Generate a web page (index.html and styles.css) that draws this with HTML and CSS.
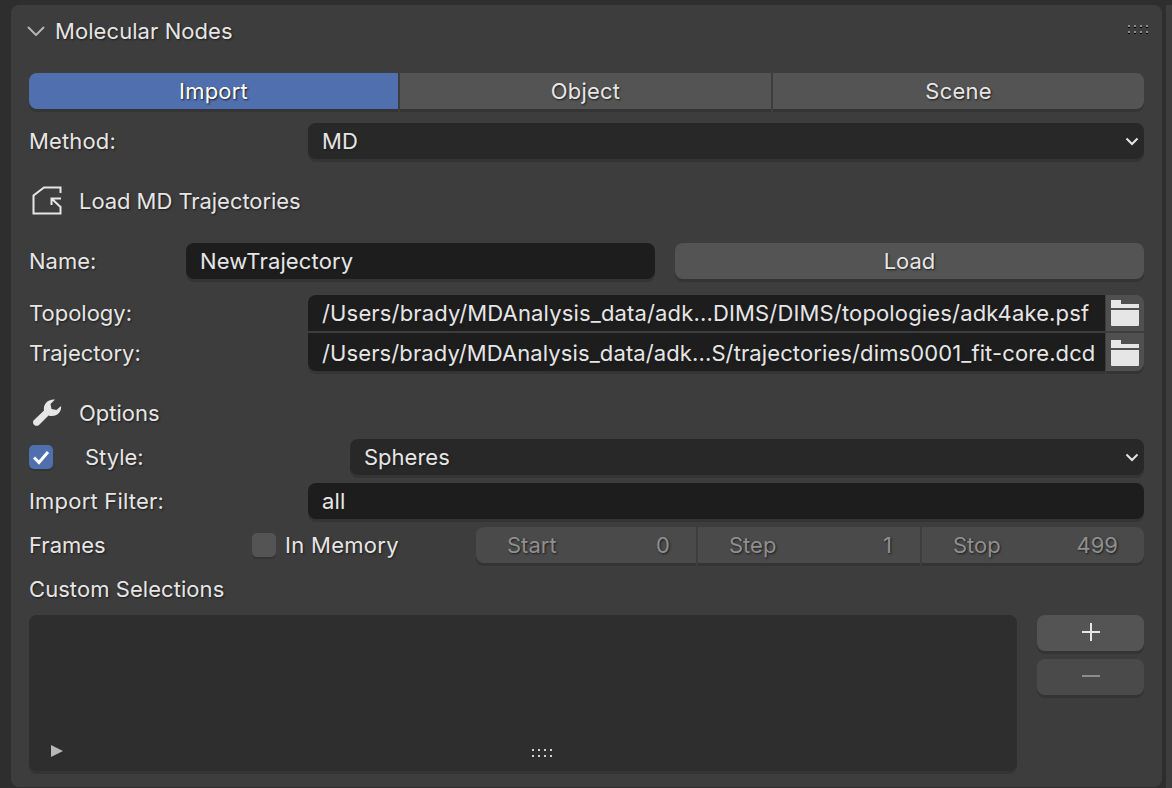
FILE: index.html
```html
<!DOCTYPE html>
<html lang="en">
<head>
    <meta charset="UTF-8">
    <meta name="viewport" content="width=device-width, initial-scale=1.0">
    <title>Molecular Nodes</title>
    <link rel="stylesheet" href="styles.css">
</head>
<body>

    <div class="Panel">

        <div class="Header">
            <svg class="Chevron" width="18" height="10" viewBox="0 0 18 10"><path d="M1 1l8 8 8-8" fill="none" stroke="#b4b4b4" stroke-width="2"/></svg>
            <span class="Title">Molecular Nodes</span>
            <svg class="Grip" width="21" height="11" viewBox="0 0 21 11">
                <path d="M0 3h2v1H0zM6 3h2v1H6zM12 3h2v1h-2zM18 3h2v1h-2zM0 9h2v1H0zM6 9h2v1H6zM12 9h2v1h-2zM18 9h2v1h-2z" fill="#000"/>
                <path d="M0 1h2v2H0zM6 1h2v2H6zM12 1h2v2h-2zM18 1h2v2h-2zM0 7h2v2H0zM6 7h2v2H6zM12 7h2v2h-2zM18 7h2v2h-2z" fill="#8c8c8c"/>
            </svg>
        </div>

        <div class="Tabs">
            <div class="Tab Active">Import</div>
            <div class="Tab">Object</div>
            <div class="Tab">Scene</div>
        </div>

        <div class="Row Method">
            <label class="Label Wide">Method:</label>
            <div class="Field Dropdown">MD
                <svg class="Arrow" width="14" height="9" viewBox="0 0 14 9"><path d="M1.500 1.500L7 7l5.500-5.500" fill="none" stroke="#e6e6e6" stroke-width="2"/></svg>
            </div>
        </div>

        <div class="Heading Load">
            <svg width="32" height="30" viewBox="0 0 32 30"><path d="M29.500 7V1.500H13L2.500 9.500V27.500H29.500V20M20.500 19V12.500H30M20.500 12.500L29.500 21" fill="none" stroke="#e6e6e6" stroke-width="2"/></svg>
            <span>Load MD Trajectories</span>
        </div>

        <div class="Row Name">
            <label class="Label Short">Name:</label>
            <div class="Field Input NameInput">NewTrajectory</div>
            <div class="Button LoadBtn">Load</div>
        </div>

        <div class="Row PathTop">
            <label class="Label Wide">Topology:</label>
            <div class="Field Input Path">/Users/brady/MDAnalysis_data/adk...DIMS/DIMS/topologies/adk4ake.psf</div>
            <div class="Browse">
                <svg width="28" height="26" viewBox="0 0 28 26"><path d="M0 0h10v4h18v4H0zM0 10h28v15a1 1 0 0 1-1 1H1a1 1 0 0 1-1-1z" fill="#e6e6e6"/></svg>
            </div>
        </div>

        <div class="Row PathBottom">
            <label class="Label Wide">Trajectory:</label>
            <div class="Field Input Path">/Users/brady/MDAnalysis_data/adk...S/trajectories/dims0001_fit-core.dcd</div>
            <div class="Browse">
                <svg width="28" height="26" viewBox="0 0 28 26"><path d="M0 0h10v4h18v4H0zM0 10h28v15a1 1 0 0 1-1 1H1a1 1 0 0 1-1-1z" fill="#e6e6e6"/></svg>
            </div>
        </div>

        <div class="Heading Options">
            <svg width="32" height="30" viewBox="0 0 32 30"><path d="M2.500 22.500L13 12.500C12 7 16 1 24 1.500L19.500 6 20.500 11 25.500 12 30 8C31 14 25 20 17.500 17.500L8 27C5 29.500 .5 26 2.500 22.500z" fill="#e6e6e6"/></svg>
            <span>Options</span>
        </div>

        <div class="Row Style">
            <div class="Check Checked">
                <svg width="18" height="16" viewBox="0 0 18 16"><path d="M2 8.500L7 13.500 16 3" fill="none" stroke="#fff" stroke-width="3"/></svg>
            </div>
            <label class="Label StyleLabel">Style:</label>
            <div class="Field Dropdown">Spheres
                <svg class="Arrow" width="14" height="9" viewBox="0 0 14 9"><path d="M1.500 1.500L7 7l5.500-5.500" fill="none" stroke="#e6e6e6" stroke-width="2"/></svg>
            </div>
        </div>

        <div class="Row Filter">
            <label class="Label Wide">Import Filter:</label>
            <div class="Field Input">all</div>
        </div>

        <div class="Row Frames">
            <label class="Label FramesLabel">Frames</label>
            <div class="Check"></div>
            <span class="Memory">In Memory</span>
            <div class="Numbers">
                <div class="Number"><span>Start</span><span>0</span></div>
                <div class="Number"><span>Step</span><span>1</span></div>
                <div class="Number"><span>Stop</span><span>499</span></div>
            </div>
        </div>

        <div class="Custom">Custom Selections</div>

        <div class="ListRow">
            <div class="List">
                <svg class="Expand" width="12" height="12" viewBox="0 0 12 12"><path d="M0 0l12 6-12 6z" fill="#b8b8b8"/></svg>
                <svg class="ListGrip" width="22" height="10" viewBox="0 0 22 10"><path d="M1 1h2v2H1zM7 1h2v2H7zM13 1h2v2h-2zM19 1h2v2h-2zM1 7h2v2H1zM7 7h2v2H7zM13 7h2v2h-2zM19 7h2v2h-2z" fill="#d0d0d0"/></svg>
            </div>
            <div class="ListButtons">
                <div class="Button Small"><svg width="18" height="18" viewBox="0 0 18 18"><path d="M0 9h18M9 0v18" stroke="#e6e6e6" stroke-width="2"/></svg></div>
                <div class="Button Small Off"><svg width="18" height="2" viewBox="0 0 18 2"><path d="M0 1h18" stroke="#8c8c8c" stroke-width="2"/></svg></div>
            </div>
        </div>

    </div>

    <div class="Gutter"></div>

</body>
</html>
```

FILE: styles.css
```css
html, body {
    margin: 0;
    height: 100%;
    overflow: hidden;
}

body {
    display: flex;
    background: #2e2e2e;
    color: #e6e6e6;
    font-family: "Inter", "Noto Sans", sans-serif;
    font-size: 22px;
    text-shadow: 1px 1px 2px #1c1c1c;
    padding: 5px 0 0 11px;
    box-sizing: border-box;
}

.Panel {
    width: 1151px;
    height: 782px;
    flex: none;
    box-sizing: border-box;
    padding: 0 18px;
    background: #3d3d3d;
    border-radius: 8px;
}

.Gutter {
    width: 6px;
    height: 783px;
    margin-left: 4px;
    background: #3d3d3d;
}

.Header {
    display: flex;
    align-items: center;
    height: 52px;
    margin-bottom: 16px;
}

.Chevron {
    margin-right: 10px;
    margin-left: -2px;
}

.Title {
    letter-spacing: 0.07px;
}

.Grip {
    margin-left: auto;
    margin-right: -5px;
    margin-top: -4px;
}

.Tabs {
    display: grid;
    grid-template-columns: 369px 371px 1fr;
    gap: 2px;
    height: 36px;
    letter-spacing: 0.2px;
}

.Tab {
    display: flex;
    align-items: center;
    justify-content: center;
    background: #545454;
    box-shadow: 0 3px 0 #343434;
}

.Tab:first-child {
    border-radius: 8px 0 0 8px;
}

.Tab:last-child {
    border-radius: 0 8px 8px 0;
}

.Tab.Active {
    background: #4f6fae;
    color: #fff;
}

.Row {
    display: flex;
    align-items: center;
    height: 36px;
}

.Method { margin-top: 14px; letter-spacing: 0.15px; }
.Name { margin-top: 22px; }
.PathTop { margin-top: 16px; }
.PathBottom { margin-top: 2px; height: 38px; }
.Style { margin-top: 6px; }
.Filter { margin-top: 8px; letter-spacing: 0.2px; }
.Frames { margin-top: 8px; }

.Label {
    flex: none;
}

.Wide { width: 279px; }
.Short { width: 157px; }
.StyleLabel { width: 265px; margin-left: 32px; }
.FramesLabel { width: 223px; }

.Field {
    flex: 1;
    min-width: 0;
    height: 36px;
    display: flex;
    align-items: center;
    box-sizing: border-box;
    padding: 0 14px;
    border-radius: 8px;
    white-space: nowrap;
    box-shadow: 0 3px 0 #343434;
}

.Dropdown {
    background: #282828;
    justify-content: space-between;
    padding-right: 4px;
}

.Input {
    background: #1d1d1d;
}

.NameInput {
    flex: none;
    width: 469px;
    letter-spacing: 0.15px;
}

.PathTop .Path {
    border-radius: 8px 0 0 0;
    box-shadow: none;
    letter-spacing: 0.155px;
}

.PathBottom .Path {
    height: 38px;
    padding-top: 2px;
    border-radius: 0 0 0 8px;
    letter-spacing: 0.11px;
}

.PathBottom .Label {
    padding-top: 2px;
}

.Arrow {
    margin-right: 1px;
}

.Button {
    display: flex;
    align-items: center;
    justify-content: center;
    background: #545454;
    border-radius: 8px;
    box-shadow: 0 3px 0 #343434;
}

.LoadBtn {
    flex: none;
    width: 469px;
    height: 36px;
    margin-left: 20px;
}

.Browse {
    flex: none;
    width: 38px;
    margin-left: 1px;
    display: flex;
    align-items: center;
    justify-content: center;
    background: #505050;
}

.PathTop .Browse {
    height: 36px;
    border-radius: 0 8px 0 0;
}

.PathBottom .Browse {
    height: 38px;
    padding-top: 2px;
    box-sizing: border-box;
    border-radius: 0 0 8px 0;
    box-shadow: 0 3px 0 #343434;
}

.Heading {
    display: flex;
    align-items: center;
    height: 40px;
    gap: 16px;
    padding-left: 2px;
}

.Load { margin-top: 22px; letter-spacing: -0.05px; }
.Options { margin-top: 22px; }

.Check {
    flex: none;
    width: 24px;
    height: 24px;
    border-radius: 5px;
    background: #545454;
    display: flex;
    align-items: center;
    justify-content: center;
    box-shadow: 0 2px 0 #343434;
}

.Check.Checked {
    background: #4f6fae;
}

.Memory {
    margin-left: 9px;
    width: 191px;
    flex: none;
    letter-spacing: 0.3px;
}

.Numbers {
    flex: 1;
    display: grid;
    grid-template-columns: 220px 222px 1fr;
    gap: 2px;
    height: 36px;
    color: #8f8f8f;
}

.Number {
    display: flex;
    align-items: center;
    justify-content: space-between;
    padding: 0 26px 0 31px;
    background: #4a4a4a;
    box-shadow: 0 3px 0 #343434;
}

.Number:first-child { border-radius: 8px 0 0 8px; }
.Number:last-child { border-radius: 0 8px 8px 0; }
.Number:nth-child(2) { padding-right: 28px; }

.Custom {
    margin-top: 4px;
    height: 44px;
    display: flex;
    align-items: center;
    letter-spacing: 0.06px;
}

.ListRow {
    display: flex;
    gap: 20px;
    margin-top: 4px;
}

.List {
    width: 988px;
    height: 156px;
    background: #2e2e2e;
    border-radius: 8px;
    position: relative;
    box-shadow: 0 3px 0 #343434;
}

.Expand {
    position: absolute;
    left: 22px;
    bottom: 14px;
}

.ListGrip {
    position: absolute;
    left: 502px;
    bottom: 13px;
}

.ListButtons {
    flex: 1;
    display: flex;
    flex-direction: column;
    gap: 8px;
}

.Small {
    height: 36px;
}

.Small svg {
    margin-bottom: 2px;
}

.Small.Off {
    background: #4a4a4a;
}
```
